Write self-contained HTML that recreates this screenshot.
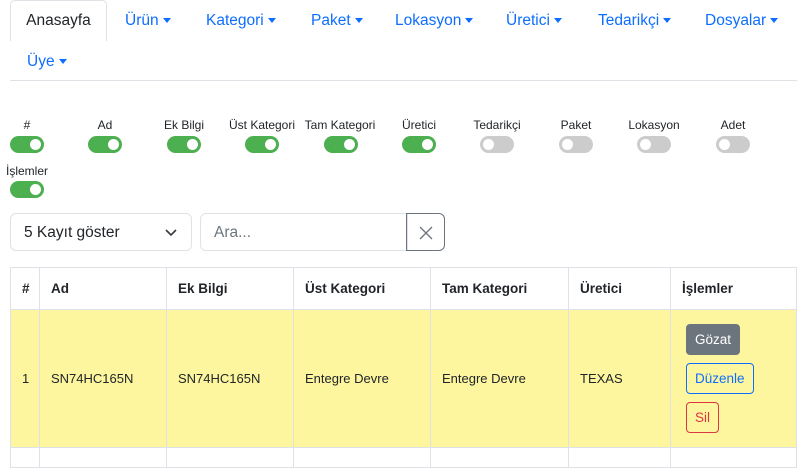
<!DOCTYPE html><html><head><meta charset="utf-8"><style>
*{box-sizing:border-box}body{margin:0;width:801px;height:452px;overflow:hidden;font-family:"Liberation Sans",sans-serif;background:#fff;color:#212529;position:relative}
.a{position:absolute}
.nav{font-size:15.5px;color:#0d6efd;white-space:nowrap}
.car{display:inline-block;border-left:4px solid transparent;border-right:4px solid transparent;border-top:5px solid #0d6efd;vertical-align:middle;margin-left:4px}
.tab{left:10px;top:0;width:97px;height:41px;border:1px solid #dee2e6;border-bottom:none;border-radius:5px 5px 0 0;background:#fff;color:#212529;font-size:15.5px;text-align:center;line-height:40px}
.lab{font-size:12px;width:78px;text-align:center}
.tg{width:34px;height:17px;border-radius:9px;background:#4caf50}
.tg:after{content:"";position:absolute;top:3px;left:20px;width:11px;height:11px;border-radius:50%;background:#fff}
.tg.off{background:#ccc}.tg.off:after{left:3px}
td,th{border:1px solid #dee2e6;padding:0 0 0 11px;text-align:left;font-size:13px}
th{font-weight:bold;font-size:13.5px;height:42px}
table{border-collapse:collapse;position:absolute;left:10px;top:267px;width:787px}
tr.y td{background:#fdf69e;height:138px}
.btn{display:inline-block;border-radius:4px;font-size:13.5px;padding:0 8px;line-height:29px}
</style></head><body>
<div class="a tab">Anasayfa</div>
<div class="a nav" style="left:125px;top:12px">Ürün<span class="car"></span></div>
<div class="a nav" style="left:206px;top:12px">Kategori<span class="car"></span></div>
<div class="a nav" style="left:311px;top:12px">Paket<span class="car"></span></div>
<div class="a nav" style="left:395px;top:12px">Lokasyon<span class="car"></span></div>
<div class="a nav" style="left:506px;top:12px">Üretici<span class="car"></span></div>
<div class="a nav" style="left:598px;top:12px">Tedarikçi<span class="car"></span></div>
<div class="a nav" style="left:705px;top:12px">Dosyalar<span class="car"></span></div>
<div class="a nav" style="left:27px;top:53px">Üye<span class="car"></span></div>
<div class="a" style="left:10px;top:80px;width:787px;height:1px;background:#dee2e6"></div>

<div class="a lab" style="left:-12px;top:118px">#</div><div class="a tg" style="left:10px;top:136px"></div>
<div class="a lab" style="left:66px;top:118px">Ad</div><div class="a tg" style="left:88px;top:136px"></div>
<div class="a lab" style="left:145px;top:118px">Ek Bilgi</div><div class="a tg" style="left:167px;top:136px"></div>
<div class="a lab" style="left:223px;top:118px">Üst Kategori</div><div class="a tg" style="left:245px;top:136px"></div>
<div class="a lab" style="left:301px;top:118px">Tam Kategori</div><div class="a tg" style="left:324px;top:136px"></div>
<div class="a lab" style="left:380px;top:118px">Üretici</div><div class="a tg" style="left:402px;top:136px"></div>
<div class="a lab" style="left:458px;top:118px">Tedarikçi</div><div class="a tg off" style="left:480px;top:136px"></div>
<div class="a lab" style="left:537px;top:118px">Paket</div><div class="a tg off" style="left:559px;top:136px"></div>
<div class="a lab" style="left:615px;top:118px">Lokasyon</div><div class="a tg off" style="left:637px;top:136px"></div>
<div class="a lab" style="left:694px;top:118px">Adet</div><div class="a tg off" style="left:716px;top:136px"></div>
<div class="a" style="left:6px;top:164px;font-size:12px">İşlemler</div><div class="a tg" style="left:10px;top:181px"></div>

<div class="a" style="left:10px;top:213px;width:182px;height:38px;border:1px solid #dee2e6;border-radius:6px;font-size:15.5px;line-height:38px;padding-left:13px">5 Kayıt göster
<svg class="a" style="left:154px;top:14px" width="12" height="10" viewBox="0 0 12 10"><path d="M1 2l5 5 5-5" fill="none" stroke="#343a40" stroke-width="1.6"/></svg></div>
<div class="a" style="left:200px;top:213px;width:208px;height:38px;border:1px solid #dee2e6;border-radius:6px 0 0 6px;font-size:15.5px;line-height:38px;padding-left:13px;color:#6c757d">Ara...</div>
<div class="a" style="left:406px;top:213px;width:39px;height:38px;border:1px solid #6c757d;border-radius:0 6px 6px 0">
<svg class="a" style="left:12px;top:12px" width="14" height="14"><path d="M1 1l12 12M13 1L1 13" stroke="#6c757d" stroke-width="1.3"/></svg></div>

<table><tr><th style="width:29px">#</th><th style="width:127px">Ad</th><th style="width:127px">Ek Bilgi</th><th style="width:137px">Üst Kategori</th><th style="width:138px">Tam Kategori</th><th style="width:102px">Üretici</th><th>İşlemler</th></tr>
<tr class="y"><td>1</td><td>SN74HC165N</td><td>SN74HC165N</td><td>Entegre Devre</td><td>Entegre Devre</td><td>TEXAS</td><td style="padding-left:15px">
<div class="btn" style="background:#6c757d;color:#fff;border:1px solid #6c757d">Gözat</div><br>
<div class="btn" style="border:1px solid #0d6efd;color:#0d6efd;margin-top:8px">Düzenle</div><br>
<div class="btn" style="border:1px solid #dc3545;color:#dc3545;margin-top:8px">Sil</div></td></tr>
<tr><td style="height:20px"></td><td></td><td></td><td></td><td></td><td></td><td></td></tr></table>
</body></html>
